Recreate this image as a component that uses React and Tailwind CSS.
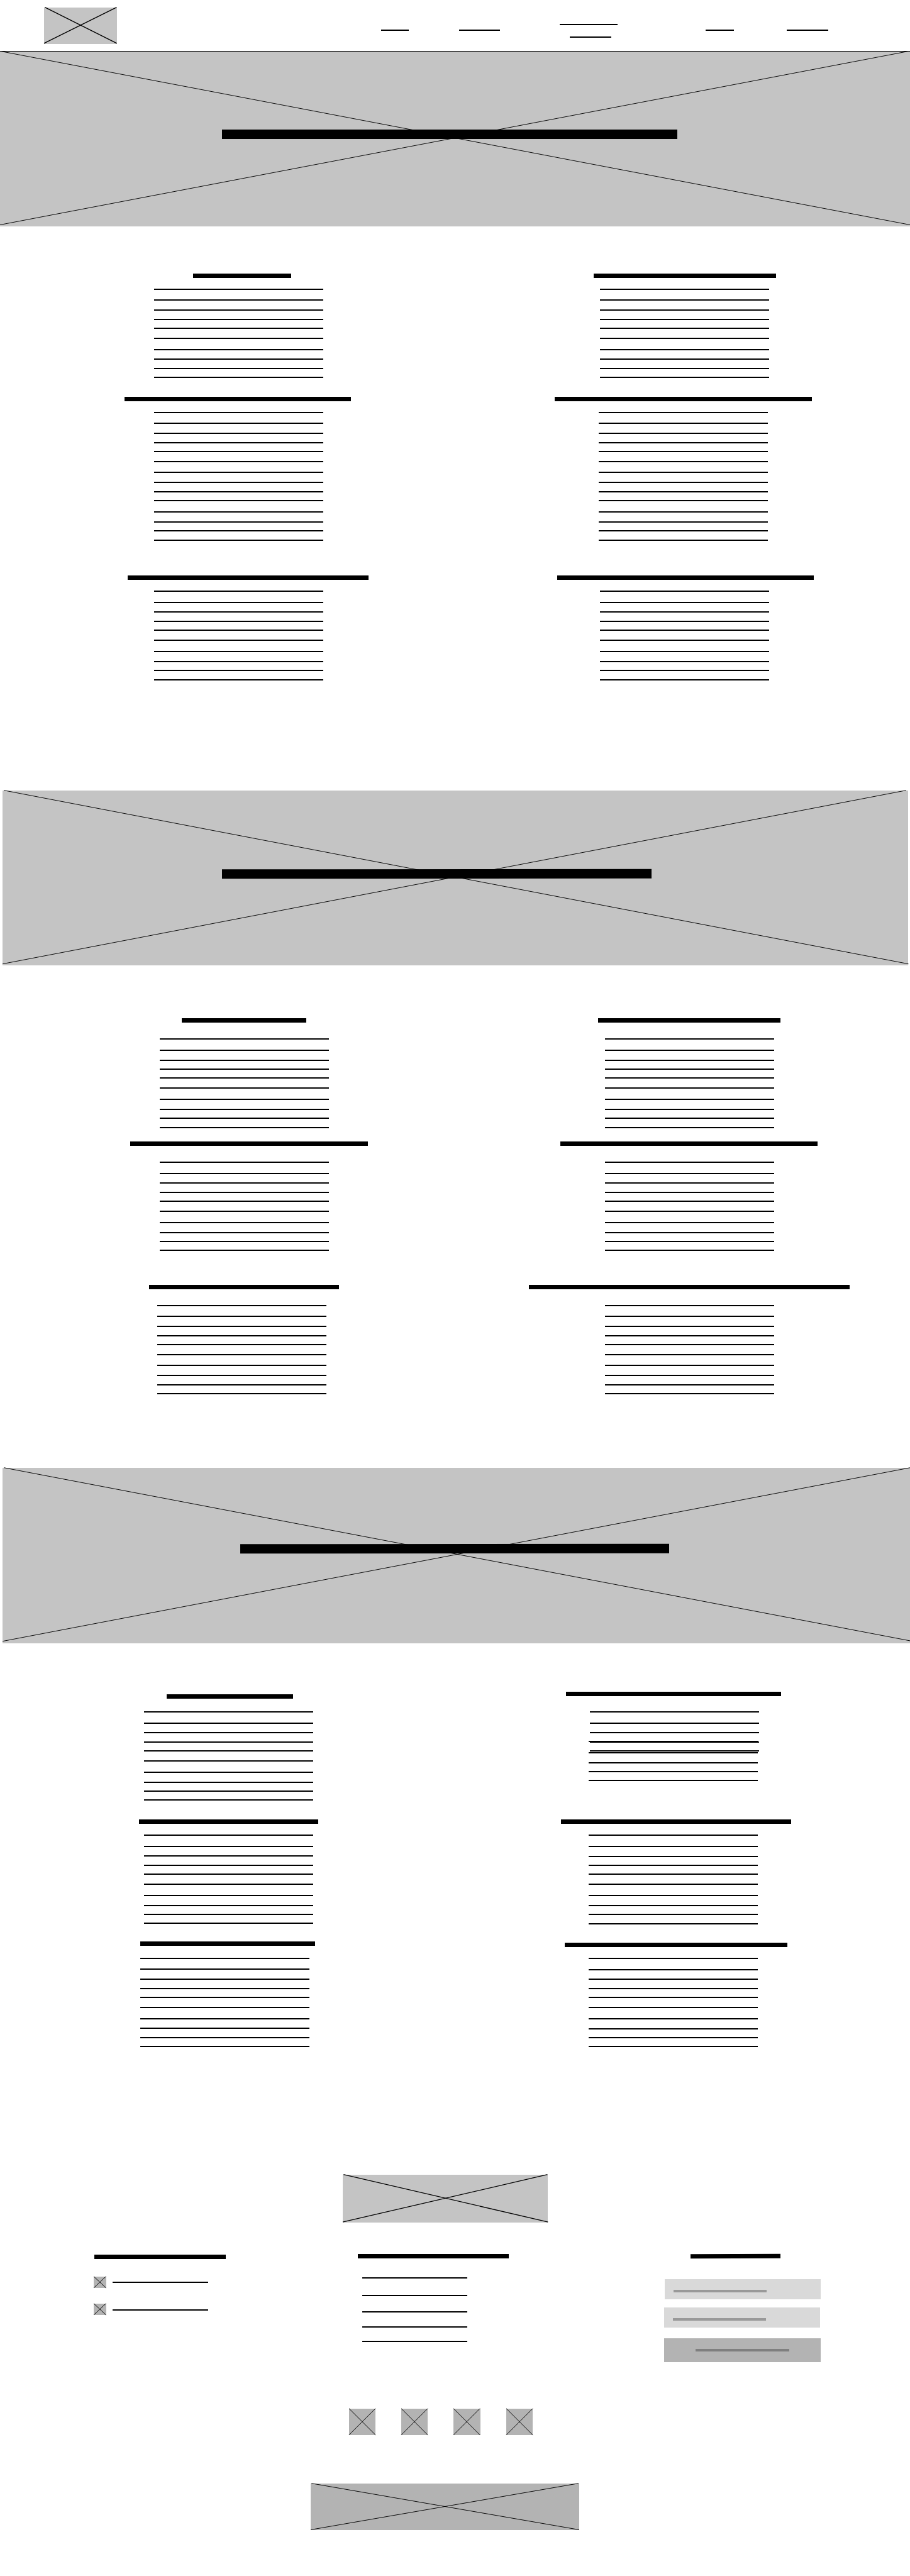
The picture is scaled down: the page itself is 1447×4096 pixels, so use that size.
import React from "react";
import clsx from "clsx";

/* Grey image placeholder crossed by two diagonals. */
function Crossed({ className, stroke = 0.95, bottom = "99%", inset = "0.15%", children }) {
  return (
    <div className={clsx("relative shrink-0", className)}>
      <svg className="block h-full w-full overflow-visible" stroke="#000" strokeWidth={stroke}>
        <line x1={inset} y1="-0.3" x2="100%" y2={bottom} />
        <line x1="99.75%" y1="-0.3" x2="0%" y2={bottom} />
      </svg>
      {children}
    </div>
  );
}

function Title({ className }) {
  return <div className={clsx("h-[7px] shrink-0 bg-black", className)} />;
}

function Rule({ className }) {
  return <div className={clsx("h-[2px] shrink-0 bg-black", className)} />;
}

/* Five text lines with the wireframe's uneven leading. */
function Lines({ className }) {
  return (
    <div className={clsx("flex w-[269.1px] shrink-0 flex-col", className)}>
      <Rule />
      <Rule className="mt-[15.36px]" />
      <Rule className="mt-[13.92px]" />
      <Rule className="mt-[12.47px]" />
      <Rule className="mt-[12.47px]" />
    </div>
  );
}

/* Ten lines, or fourteen when long. */
function Paragraph({ className, long }) {
  return (
    <div className={clsx("flex shrink-0 flex-col", className)}>
      <Lines />
      <Lines className="mt-[13.92px]" />
      {long && (
        <>
          <Rule className="mt-[15.36px]" />
          <Rule className="mt-[13.92px]" />
          <Rule className="mt-[12.47px]" />
          <Rule className="mt-[12.47px]" />
        </>
      )}
    </div>
  );
}

function Column({ className, children }) {
  return <div className={clsx("flex w-1/2 flex-col items-start", className)}>{children}</div>;
}

function Header() {
  return (
    <header className="flex h-[82px] items-start border-b border-black pl-[70.2px]">
      <Crossed className="mt-[12.3px] h-[57.9px] w-[115.7px] bg-[#c4c4c4]" stroke={1.5} bottom="98.3%" inset="1.3%" />
      <Rule className="mt-[47px] ml-[419.7px] w-[44.9px]" />
      <Rule className="mt-[47px] ml-[79.5px] w-[65.5px]" />
      <div className="mt-[38px] ml-[94.4px] flex w-[92.6px] flex-col">
        <Rule />
        <Rule className="mt-[17.9px] ml-[16.3px] w-[65.5px]" />
      </div>
      <Rule className="mt-[47px] ml-[139.6px] w-[45.2px]" />
      <Rule className="mt-[47px] ml-[84px] w-[65.5px]" />
    </header>
  );
}

function SectionOne() {
  return (
    <section className="flex h-[896.3px]">
      <Column className="pt-[74.5px]">
        <Title className="ml-[306.8px] w-[156.3px]" />
        <Paragraph className="mt-[17.3px] ml-[244.5px]" />
        <Title className="mt-[29.3px] ml-[198.2px] w-[359.6px]" />
        <Paragraph long className="mt-[17.3px] ml-[244.5px]" />
        <Title className="mt-[55.4px] ml-[203.3px] w-[382.7px]" />
        <Paragraph className="mt-[17.3px] ml-[244.5px]" />
      </Column>
      <Column className="pt-[74.5px]">
        <Title className="ml-[220.7px] w-[289.4px]" />
        <Paragraph className="mt-[17.3px] ml-[230.8px]" />
        <Title className="mt-[29.3px] ml-[158.4px] w-[408.8px]" />
        <Paragraph long className="mt-[17.3px] ml-[228.6px]" />
        <Title className="mt-[55.4px] ml-[162.1px] w-[408.8px]" />
        <Paragraph className="mt-[17.3px] ml-[230.8px]" />
      </Column>
    </section>
  );
}

function SectionTwo() {
  return (
    <section className="flex h-[799.4px]">
      <Column className="pt-[83.9px]">
        <Title className="ml-[289px] w-[198.2px]" />
        <Paragraph className="mt-[25.3px] ml-[253.9px]" />
        <Title className="mt-[21.4px] ml-[206.9px] w-[377.7px]" />
        <Paragraph className="mt-[25.2px] ml-[253.9px]" />
        <Title className="mt-[54px] ml-[237.3px] w-[301.7px]" />
        <Paragraph className="mt-[24.5px] ml-[249.6px]" />
      </Column>
      <Column className="pt-[83.9px]">
        <Title className="ml-[227.9px] w-[289.4px]" />
        <Paragraph className="mt-[25.3px] ml-[238px]" />
        <Title className="mt-[21.4px] ml-[167.9px] w-[408.8px]" />
        <Paragraph className="mt-[25.2px] ml-[238px]" />
        <Title className="mt-[54px] ml-[117.9px] w-[509.3px]" />
        <Paragraph className="mt-[24.5px] ml-[238px]" />
      </Column>
    </section>
  );
}

function SectionThree() {
  return (
    <section className="flex h-[844.9px]">
      <Column className="pt-[81px]">
        <Title className="ml-[264.8px] w-[201.1px]" />
        <Paragraph className="mt-[20.2px] ml-[228.6px]" />
        <Title className="mt-[29.4px] ml-[220.7px] w-[285px]" />
        <Paragraph className="mt-[17.3px] ml-[228.6px]" />
        <Title className="mt-[27.9px] ml-[222.8px] w-[277.8px]" />
        <Paragraph className="mt-[18.7px] ml-[222.8px]" />
      </Column>
      <Column className="pt-[77.4px]">
        <Title className="ml-[176.5px] w-[341.5px]" />
        <Lines className="mt-[23.8px] ml-[214.9px]" />
        <Lines className="-mt-[17.1px] ml-[212.7px]" />
        <Title className="mt-[60.5px] ml-[168.6px] w-[366.1px]" />
        <Paragraph className="mt-[17.3px] ml-[212.7px]" />
        <Title className="mt-[29.7px] ml-[174px] w-[354.5px]" />
        <Paragraph className="mt-[16.9px] ml-[212.7px]" />
      </Column>
    </section>
  );
}

function ContactRow({ className }) {
  return (
    <div className={clsx("flex h-[18.1px] items-start", className)}>
      <Crossed className="h-[18.1px] w-[19.5px] bg-[#b3b3b3]" />
      <Rule className="mt-[8.3px] ml-[10.9px] w-[151.2px]" />
    </div>
  );
}

function Field({ className }) {
  return (
    <div className={clsx("h-[32px] w-[248.4px] bg-[#d9d9d9] pt-[17.4px] pl-[14.1px]", className)}>
      <div className="h-[4px] w-[148.3px] bg-[#999999]" />
    </div>
  );
}

function Footer() {
  return (
    <footer className="flex flex-col items-start">
      <Crossed className="ml-[544.8px] h-[76px] w-[326.3px] bg-[#c4c4c4]" stroke={1.3} bottom="98.8%" inset="0.4%" />

      <div className="flex h-[295.9px] w-full">
        <div className="flex w-1/3 flex-col items-start pt-[51px] pl-[149px]">
          <Title className="ml-[0.8px] w-[209.1px]" />
          <ContactRow className="mt-[28.1px]" />
          <ContactRow className="mt-[25.3px]" />
        </div>
        <div className="flex w-1/3 flex-col items-start pt-[50.3px] pl-[87.1px]">
          <Title className="w-[239.5px]" />
          <div className="mt-[30px] ml-[6.5px] flex w-[166.8px] flex-col">
            <Rule />
            <Rule className="mt-[26.2px]" />
            <Rule className="mt-[23.5px]" />
            <Rule className="mt-[22px]" />
            <Rule className="mt-[21.5px]" />
          </div>
        </div>
        <div className="flex w-1/3 flex-col items-start pt-[50.6px] pl-[91.3px]">
          <Title className="ml-[42.5px] w-[142.5px] -rotate-[0.29deg]" />
          <Field className="mt-[32.5px] ml-[0.6px]" />
          <Field className="mt-[12.7px]" />
          <div className="mt-[17.3px] flex h-[38.3px] w-[248.8px] justify-center bg-[#b3b3b3] pt-[17.3px]">
            <div className="h-[4px] w-[148.3px] bg-[#7f7f7f]" />
          </div>
        </div>
      </div>

      <div className="ml-[555.1px] flex gap-[41px]">
        <Crossed className="size-[42.2px] bg-[#b3b3b3]" />
        <Crossed className="size-[42.2px] bg-[#b3b3b3]" />
        <Crossed className="size-[42.2px] bg-[#b3b3b3]" />
        <Crossed className="size-[42.2px] bg-[#b3b3b3]" />
      </div>
      <Crossed className="mt-[77.1px] ml-[494.4px] h-[73.8px] w-[426.9px] bg-[#b3b3b3]" bottom="99.6%" inset="0.3%" />
    </footer>
  );
}

export default function App() {
  return (
    <div className="flex h-[4096px] w-[1447px] flex-col overflow-hidden bg-white">
      <Header />
      <Crossed className="h-[278.3px] bg-[#c4c4c4]">
        <div className="absolute top-[124.2px] left-[353.4px] h-[14.5px] w-[723.5px] bg-black" />
      </Crossed>
      <SectionOne />
      <Crossed className="ml-[3.6px] h-[278.5px] w-[1440.5px] bg-[#c4c4c4]">
        <div className="absolute top-[125.5px] left-[349.8px] h-[14.5px] w-[683px] -rotate-[0.06deg] bg-black" />
      </Crossed>
      <SectionTwo />
      <Crossed className="ml-[3.6px] h-[278.5px] w-[1447px] bg-[#c4c4c4]">
        <div className="absolute top-[120.4px] left-[378.4px] h-[14.5px] w-[682px] -rotate-[0.06deg] bg-black" />
      </Crossed>
      <SectionThree />
      <Footer />
    </div>
  );
}
